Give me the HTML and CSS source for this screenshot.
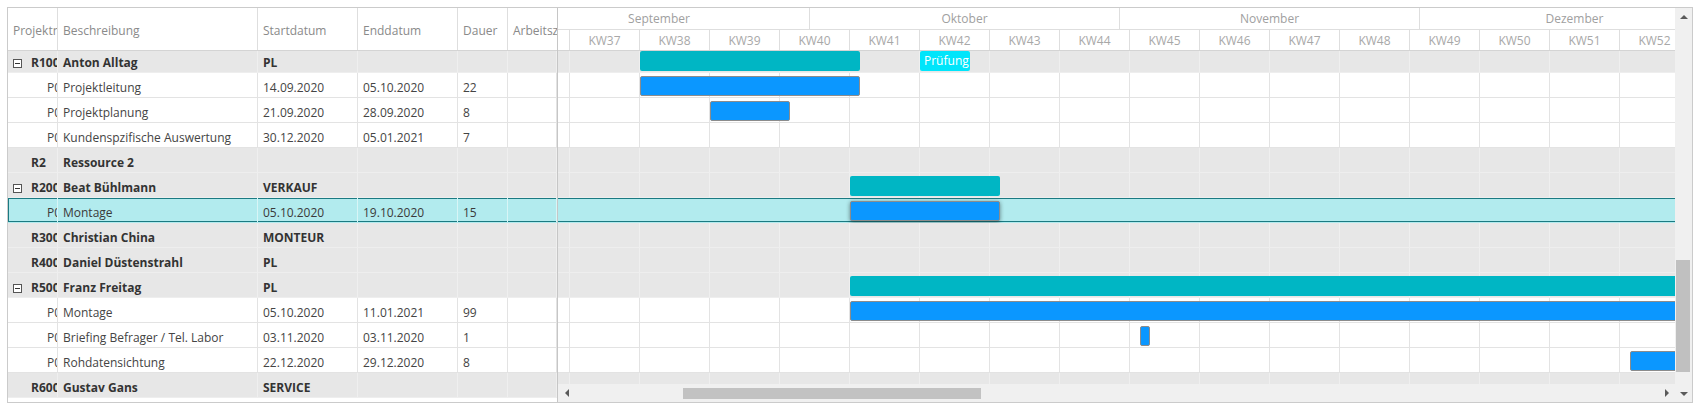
FILE: index.html
```html
<!DOCTYPE html>
<html lang="de">
<head>
    <meta charset="UTF-8">
    <title>Ressourcenplanung</title>
    <link rel="stylesheet" href="styles.css">
</head>
<body>
    <div class="gantt">
        <!-- Tabelle links -->
        <div class="grid">
            <div class="grid-head">
                <div class="cell c-id">Projektnummer</div>
                <div class="cell c-desc">Beschreibung</div>
                <div class="cell c-start">Startdatum</div>
                <div class="cell c-end">Enddatum</div>
                <div class="cell c-dur">Dauer</div>
                <div class="cell c-work">Arbeitszeit</div>
            </div>
            <div class="grid-body">
                <div class="rows">
                    <div class="row group">
                        <div class="cell c-id"><span class="toggle"></span>R100</div>
                        <div class="cell c-desc">Anton Alltag</div>
                        <div class="cell c-start">PL</div>
                        <div class="cell c-end"></div>
                        <div class="cell c-dur"></div>
                        <div class="cell c-work"></div>
                    </div>
                    <div class="row">
                        <div class="cell c-id">P0001</div>
                        <div class="cell c-desc">Projektleitung</div>
                        <div class="cell c-start">14.09.2020</div>
                        <div class="cell c-end">05.10.2020</div>
                        <div class="cell c-dur">22</div>
                        <div class="cell c-work"></div>
                    </div>
                    <div class="row">
                        <div class="cell c-id">P0002</div>
                        <div class="cell c-desc">Projektplanung</div>
                        <div class="cell c-start">21.09.2020</div>
                        <div class="cell c-end">28.09.2020</div>
                        <div class="cell c-dur">8</div>
                        <div class="cell c-work"></div>
                    </div>
                    <div class="row">
                        <div class="cell c-id">P0003</div>
                        <div class="cell c-desc">Kundenspzifische Auswertung</div>
                        <div class="cell c-start">30.12.2020</div>
                        <div class="cell c-end">05.01.2021</div>
                        <div class="cell c-dur">7</div>
                        <div class="cell c-work"></div>
                    </div>
                    <div class="row group">
                        <div class="cell c-id"><span class="toggle none"></span>R2</div>
                        <div class="cell c-desc">Ressource 2</div>
                        <div class="cell c-start"></div>
                        <div class="cell c-end"></div>
                        <div class="cell c-dur"></div>
                        <div class="cell c-work"></div>
                    </div>
                    <div class="row group">
                        <div class="cell c-id"><span class="toggle"></span>R200</div>
                        <div class="cell c-desc">Beat Bühlmann</div>
                        <div class="cell c-start">VERKAUF</div>
                        <div class="cell c-end"></div>
                        <div class="cell c-dur"></div>
                        <div class="cell c-work"></div>
                    </div>
                    <div class="row sel">
                        <div class="cell c-id">P0004</div>
                        <div class="cell c-desc">Montage</div>
                        <div class="cell c-start">05.10.2020</div>
                        <div class="cell c-end">19.10.2020</div>
                        <div class="cell c-dur">15</div>
                        <div class="cell c-work"></div>
                    </div>
                    <div class="row group">
                        <div class="cell c-id"><span class="toggle none"></span>R300</div>
                        <div class="cell c-desc">Christian China</div>
                        <div class="cell c-start">MONTEUR</div>
                        <div class="cell c-end"></div>
                        <div class="cell c-dur"></div>
                        <div class="cell c-work"></div>
                    </div>
                    <div class="row group">
                        <div class="cell c-id"><span class="toggle none"></span>R400</div>
                        <div class="cell c-desc">Daniel Düstenstrahl</div>
                        <div class="cell c-start">PL</div>
                        <div class="cell c-end"></div>
                        <div class="cell c-dur"></div>
                        <div class="cell c-work"></div>
                    </div>
                    <div class="row group">
                        <div class="cell c-id"><span class="toggle"></span>R500</div>
                        <div class="cell c-desc">Franz Freitag</div>
                        <div class="cell c-start">PL</div>
                        <div class="cell c-end"></div>
                        <div class="cell c-dur"></div>
                        <div class="cell c-work"></div>
                    </div>
                    <div class="row">
                        <div class="cell c-id">P0005</div>
                        <div class="cell c-desc">Montage</div>
                        <div class="cell c-start">05.10.2020</div>
                        <div class="cell c-end">11.01.2021</div>
                        <div class="cell c-dur">99</div>
                        <div class="cell c-work"></div>
                    </div>
                    <div class="row">
                        <div class="cell c-id">P0006</div>
                        <div class="cell c-desc">Briefing Befrager / Tel. Labor</div>
                        <div class="cell c-start">03.11.2020</div>
                        <div class="cell c-end">03.11.2020</div>
                        <div class="cell c-dur">1</div>
                        <div class="cell c-work"></div>
                    </div>
                    <div class="row">
                        <div class="cell c-id">P0007</div>
                        <div class="cell c-desc">Rohdatensichtung</div>
                        <div class="cell c-start">22.12.2020</div>
                        <div class="cell c-end">29.12.2020</div>
                        <div class="cell c-dur">8</div>
                        <div class="cell c-work"></div>
                    </div>
                    <div class="row group">
                        <div class="cell c-id"><span class="toggle none"></span>R600</div>
                        <div class="cell c-desc">Gustav Gans</div>
                        <div class="cell c-start">SERVICE</div>
                        <div class="cell c-end"></div>
                        <div class="cell c-dur"></div>
                        <div class="cell c-work"></div>
                    </div>
                </div>
            </div>
        </div>

        <div class="splitter"></div>

        <!-- Zeitachse rechts, 10px pro Tag, KW37 beginnt bei 11px -->
        <div class="chart">
            <div class="timescale">
                <div class="months">
                    <div class="month m30">September</div>
                    <div class="month m31">Oktober</div>
                    <div class="month m30">November</div>
                    <div class="month m31">Dezember</div>
                </div>
                <div class="weeks">
                    <div class="week-lead"></div>
                    <div class="week">KW37</div>
                    <div class="week">KW38</div>
                    <div class="week">KW39</div>
                    <div class="week">KW40</div>
                    <div class="week">KW41</div>
                    <div class="week">KW42</div>
                    <div class="week">KW43</div>
                    <div class="week">KW44</div>
                    <div class="week">KW45</div>
                    <div class="week">KW46</div>
                    <div class="week">KW47</div>
                    <div class="week">KW48</div>
                    <div class="week">KW49</div>
                    <div class="week">KW50</div>
                    <div class="week">KW51</div>
                    <div class="week">KW52</div>
                </div>
            </div>
            <div class="chart-body">
                <div class="rows">
                    <div class="crow group">
                        <div class="bar summary" style="left: 82px; width: 220px;"></div>
                        <div class="bar work" style="left: 362px; width: 50px;">Prüfung</div>
                    </div>
                    <div class="crow">
                        <div class="bar task" style="left: 82px; width: 220px;"></div>
                    </div>
                    <div class="crow">
                        <div class="bar task" style="left: 152px; width: 80px;"></div>
                    </div>
                    <div class="crow"></div>
                    <div class="crow group"></div>
                    <div class="crow group">
                        <div class="bar summary" style="left: 292px; width: 150px;"></div>
                    </div>
                    <div class="crow sel">
                        <div class="bar task active" style="left: 292px; width: 150px;"></div>
                    </div>
                    <div class="crow group"></div>
                    <div class="crow group"></div>
                    <div class="crow group">
                        <div class="bar summary" style="left: 292px; width: 990px;"></div>
                    </div>
                    <div class="crow">
                        <div class="bar task" style="left: 292px; width: 990px;"></div>
                    </div>
                    <div class="crow">
                        <div class="bar task" style="left: 582px; width: 10px;"></div>
                    </div>
                    <div class="crow">
                        <div class="bar task" style="left: 1072px; width: 80px;"></div>
                    </div>
                    <div class="crow group"></div>
                </div>
            </div>
            <div class="hscroll">
                <div class="sb-btn"><span class="tri tri-left"></span></div>
                <div class="htrack"><div class="hthumb"></div></div>
                <div class="sb-btn"><span class="tri tri-right"></span></div>
            </div>
        </div>

        <div class="vscroll">
            <div class="sb-btn"><span class="tri tri-up"></span></div>
            <div class="vtrack"><div class="vthumb"></div></div>
            <div class="sb-btn"><span class="tri tri-down"></span></div>
        </div>
    </div>
</body>
</html>
```

FILE: styles.css
```css
/* Allgemein */
body {
    margin: 0;
    background-color: #ffffff;
    font-family: "Open Sans", "Noto Sans", sans-serif;
    font-size: 12px;
    color: #444;
}

.gantt {
    margin: 7px;
    width: 1684px;
    height: 394px;
    border: 1px solid #cbcbcb;
    display: flex;
}

/* Tabelle */
.grid {
    width: 549px;
    flex-shrink: 0;
    display: flex;
    flex-direction: column;
}

.grid-head {
    height: 43px;
    flex-shrink: 0;
    display: flex;
    box-sizing: border-box;
    border-bottom: 1px solid #d4d4d4;
    color: #8a8a8a;
}

.grid-head .cell {
    display: flex;
    align-items: center;
    padding: 3px 0 0 5px;
    border-right: 1px solid #dedede;
}

.cell {
    box-sizing: border-box;
    flex-shrink: 0;
    white-space: nowrap;
    overflow: hidden;
}

.c-id { width: 50px; }
.c-desc { width: 200px; }
.c-start { width: 100px; }
.c-end { width: 100px; }
.c-dur { width: 50px; }
.c-work { width: 49px; }

.grid-head .c-work,
.row .c-work {
    border-right: none;
}

.grid-body {
    flex: 1;
    overflow: hidden;
}

/* Liste ist um 3px nach unten gescrollt */
.rows {
    margin-top: -3px;
}

.row {
    display: flex;
    height: 25px;
    box-sizing: border-box;
    border-bottom: 1px solid #e3e3e3;
}

.row .cell {
    padding: 3px 0 0 5px;
    line-height: 24px;
    border-right: 1px solid #e3e3e3;
}

.row .c-id {
    padding-left: 39px;
}

.row.group {
    background-color: #e7e7e7;
    border-bottom-color: #eeeeee;
    color: #333;
    font-weight: 700;
}

.row.group .cell {
    border-right-color: #efefef;
}

.row.group .c-id {
    padding-left: 5px;
}

.row.sel {
    background-color: #b2ebee;
    border-bottom-color: transparent;
    box-shadow: inset 0 1px #1b7a82, inset 0 -1px #1b7a82, inset 1px 0 #1b7a82;
    color: #3a3a3a;
}

.row.sel .cell {
    border-right-color: #d8f5f6;
}

/* Auf-/Zuklappen */
.toggle {
    display: inline-block;
    position: relative;
    width: 9px;
    height: 9px;
    margin-right: 9px;
    box-sizing: border-box;
    border: 1px solid #555;
    background-color: #fff;
    vertical-align: -1px;
}

.toggle::after {
    content: "";
    position: absolute;
    left: 1px;
    right: 1px;
    top: 3px;
    height: 1px;
    background-color: #333;
}

.toggle.none {
    visibility: hidden;
}

.splitter {
    width: 1px;
    flex-shrink: 0;
    background-color: #c6c6c6;
}

/* Zeitachse */
.chart {
    width: 1117px;
    flex-shrink: 0;
    display: flex;
    flex-direction: column;
    overflow: hidden;
}

.timescale {
    height: 43px;
    flex-shrink: 0;
    box-sizing: border-box;
    border-bottom: 1px solid #d4d4d4;
    color: #a0a0a0;
}

.months {
    display: flex;
    height: 22px;
    margin-left: -49px;
    box-sizing: border-box;
    border-bottom: 1px solid #dedede;
}

.month {
    flex-shrink: 0;
    box-sizing: border-box;
    text-align: center;
    line-height: 21px;
    border-left: 1px solid #dedede;
}

.month:first-child {
    border-left: none;
}

.m30 { width: 300px; }
.m31 { width: 310px; }

.weeks {
    display: flex;
    height: 20px;
}

.week-lead {
    width: 11px;
    flex-shrink: 0;
}

.week {
    width: 70px;
    flex-shrink: 0;
    box-sizing: border-box;
    border-left: 1px solid #dedede;
    padding-top: 2px;
    text-align: center;
    line-height: 18px;
    color: #a8a8a8;
}

.chart-body {
    flex: 1;
    overflow: hidden;
}

.crow {
    position: relative;
    height: 25px;
    box-sizing: border-box;
    border-bottom: 1px solid #e3e3e3;
    background-image: repeating-linear-gradient(90deg, #e3e3e3 0 1px, transparent 1px 70px);
    background-position: 11px 0;
}

.crow.group {
    background-color: #e7e7e7;
    border-bottom-color: #eeeeee;
    background-image: repeating-linear-gradient(90deg, #efefef 0 1px, transparent 1px 70px);
}

.crow.sel {
    background: #b2ebee;
    border-bottom-color: transparent;
    box-shadow: inset 0 1px #1b7a82, inset 0 -1px #1b7a82;
}

/* Balken */
.bar {
    position: absolute;
    top: 3px;
    height: 20px;
    box-sizing: border-box;
    border-radius: 2px;
}

.bar.summary {
    background-color: #00b6c4;
}

.bar.task {
    background-color: #0b97ff;
    border: 1px solid #8c8c8c;
}

.bar.task.active {
    box-shadow: 0 1px 4px rgba(0, 0, 0, 0.45);
}

.bar.work {
    background-color: #00e5fb;
    color: #ffffff;
    padding: 1px 0 0 4px;
    line-height: 18px;
}

/* Scrollbalken */
.hscroll {
    height: 18px;
    flex-shrink: 0;
    display: flex;
    background-color: #f0f0f0;
}

.htrack {
    flex: 1;
    display: flex;
    align-items: center;
}

.hthumb {
    margin-left: 108px;
    width: 298px;
    height: 11px;
    background-color: #c2c2c2;
}

.vscroll {
    width: 17px;
    flex-shrink: 0;
    display: flex;
    flex-direction: column;
    background-color: #f0f0f0;
}

.vtrack {
    flex: 1;
}

.vthumb {
    margin: 235px 0 0 1px;
    width: 14px;
    height: 112px;
    background-color: #c0c0c0;
}

.sb-btn {
    width: 17px;
    height: 18px;
    flex-shrink: 0;
    display: flex;
    align-items: center;
    justify-content: center;
}

.vscroll .sb-btn {
    height: 17px;
}

.tri {
    width: 0;
    height: 0;
}

.tri-up {
    border-left: 4px solid transparent;
    border-right: 4px solid transparent;
    border-bottom: 4px solid #5a5a5a;
}

.tri-down {
    border-left: 4px solid transparent;
    border-right: 4px solid transparent;
    border-top: 4px solid #5a5a5a;
}

.tri-left {
    border-top: 4px solid transparent;
    border-bottom: 4px solid transparent;
    border-right: 4px solid #5a5a5a;
}

.tri-right {
    border-top: 4px solid transparent;
    border-bottom: 4px solid transparent;
    border-left: 4px solid #5a5a5a;
}
```
